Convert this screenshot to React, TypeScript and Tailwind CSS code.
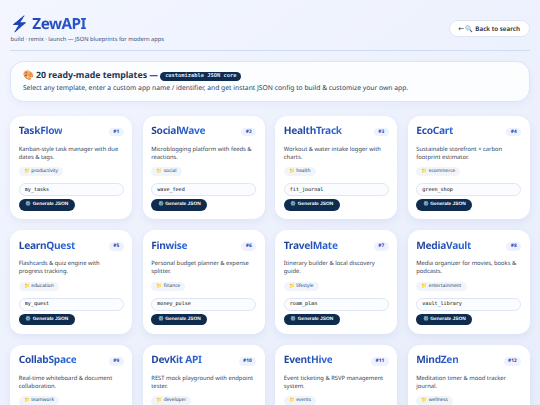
type Template = {
  name: string;
  description: string;
  category: string;
  slug: string;
};

const templates: Template[] = [
  { name: "TaskFlow", description: "Kanban-style task manager with due dates & tags.", category: "productivity", slug: "my_tasks" },
  { name: "SocialWave", description: "Microblogging platform with feeds & reactions.", category: "social", slug: "wave_feed" },
  { name: "HealthTrack", description: "Workout & water intake logger with charts.", category: "health", slug: "fit_journal" },
  { name: "EcoCart", description: "Sustainable storefront + carbon footprint estimator.", category: "ecommerce", slug: "green_shop" },
  { name: "LearnQuest", description: "Flashcards & quiz engine with progress tracking.", category: "education", slug: "my_quest" },
  { name: "Finwise", description: "Personal budget planner & expense splitter.", category: "finance", slug: "money_pulse" },
  { name: "TravelMate", description: "Itinerary builder & local discovery guide.", category: "lifestyle", slug: "roam_plan" },
  { name: "MediaVault", description: "Media organizer for movies, books & podcasts.", category: "entertainment", slug: "vault_library" },
  { name: "CollabSpace", description: "Real-time whiteboard & document collaboration.", category: "teamwork", slug: "team_space" },
  { name: "DevKit API", description: "REST mock playground with endpoint tester.", category: "developer", slug: "dev_kit" },
  { name: "EventHive", description: "Event ticketing & RSVP management system.", category: "events", slug: "event_hub" },
  { name: "MindZen", description: "Meditation timer & mood tracker journal.", category: "wellness", slug: "mind_zen" },
];

function TemplateCard({ template, index }: { template: Template; index: number }) {
  return (
    <article className="flex h-[103.8px] flex-col items-start rounded-[12px] bg-white px-[8.4px] pt-[7.6px] shadow-[0_3px_8px_rgba(30,58,138,0.07)]">
      <div className="flex h-[15px] w-full items-center justify-between">
        <h3 className="bg-linear-135 from-[#1e3a8a] to-[#2f6fe8] bg-clip-text text-[10.2px] leading-[15px] font-bold tracking-[-0.03em] text-transparent">
          {template.name}
        </h3>
        <span className="mt-[3px] rounded-full bg-[#eef2ff] px-[4.5px] text-[4.8px] leading-[8.8px] font-bold text-[#1e40af]">
          #{index + 1}
        </span>
      </div>
      <p className="mt-[6.6px] h-[16.4px] w-full text-[5.8px] leading-[8.2px] text-[#334155]">
        {template.description}
      </p>
      <span className="mt-[6.2px] rounded-full bg-[#f1f5f9] px-[5.2px] text-[4.8px] leading-[9.2px] text-[#1e4976]">
        📁 {template.category}
      </span>
      <input
        type="text"
        defaultValue={template.slug}
        className="mt-[6.6px] h-[13px] w-full shrink-0 rounded-full border-[0.5px] border-[#dfe6f3] bg-[#fafcff] px-[5px] font-['DejaVu_Sans_Mono',monospace] text-[5.07px] text-black outline-none [text-rendering:geometricPrecision]"
      />
      <button className="mt-[3px] h-[11.6px] shrink-0 rounded-full bg-[#0f2b4d] px-[6.6px] font-['Liberation_Sans',sans-serif] text-[4.85px] leading-[11.5px] font-bold text-white [text-rendering:geometricPrecision]">
        ⚙️ Generate JSON
      </button>
    </article>
  );
}

export default function App() {
  return (
    <div className="h-[405px] overflow-hidden bg-linear-145 from-[#f3f6ff] to-[#e8edfb] px-[10.4px] pt-[14px] font-['Noto_Sans',sans-serif] [text-rendering:geometricPrecision]">
      <header className="flex h-[37px] items-start justify-between border-b border-[#cfdcf5]">
        <div>
          <h1 className="bg-linear-135 from-[#1e40af] to-[#3673ea] bg-clip-text text-[15.3px] leading-[20px] font-bold tracking-[-0.035em] text-transparent">
            ⚡ ZewAPI
          </h1>
          <p className="mt-[1px] text-[5.73px] leading-[8px] text-[#334e78]">
            build · remix · launch — JSON blueprints for modern apps
          </p>
        </div>
        <button className="mt-[6px] h-[17px] rounded-full border-[0.5px] border-[#dde5f3] bg-white px-[8.6px] text-[6.3px] leading-[16px] font-semibold text-[#1e293b] [text-rendering:geometricPrecision]">
          <span className="font-['DejaVu_Sans',sans-serif] text-[7px] font-normal">←</span> 🔍 Back to search
        </button>
      </header>

      <section className="mt-[10px] h-[41px] rounded-[13.5px] border border-[#d9e5fa] bg-[#fbfdff] px-[11.5px] pt-[7.6px] shadow-[0_3px_8px_rgba(30,58,138,0.04)]">
        <h2 className="flex h-[12px] items-center text-[8.75px] font-bold whitespace-pre text-[#1e3355]">
          🎨 20 ready-made templates —{" "}
          <code className="mt-[2px] rounded-full bg-[#0f2b4d] px-[4.8px] font-['DejaVu_Sans_Mono',monospace] text-[5.4px] leading-[9px] text-[#dbeafe]">
            customizable JSON core
          </code>
        </h2>
        <p className="mt-[1.6px] text-[6.75px] leading-[10px] text-[#2b3f5c]">
          Select any template, enter a custom app name / identifier, and get instant JSON config to build & customize your own app.
        </p>
      </section>

      <main className="mt-[13.5px] grid grid-cols-4 gap-x-[10.8px] gap-y-[10.8px]">
        {templates.map((template, index) => (
          <TemplateCard key={template.name} template={template} index={index} />
        ))}
      </main>
    </div>
  );
}
